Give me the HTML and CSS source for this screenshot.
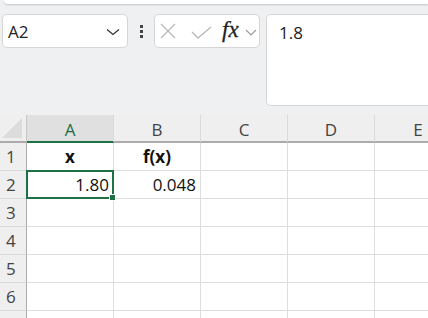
FILE: index.html
```html
<!DOCTYPE html>
<html lang="en">
<head>
    <meta charset="UTF-8">
    <title>Sheet</title>
    <link rel="stylesheet" href="styles.css">
</head>
<body>
<div class="ribbon"></div>

<div class="formula-row">
    <div class="namebox">
        <span>A2</span>
        <svg width="14" height="8" viewBox="0 0 14 8"><path d="M1 1.5 L7 6.5 L13 1.5" fill="none" stroke="#333" stroke-width="1.3"/></svg>
    </div>
    <div class="dots"><i></i><i></i><i></i></div>
    <div class="buttons">
        <svg width="16" height="16" viewBox="0 0 16 16"><path d="M1 1 L15 15 M15 1 L1 15" stroke="#b8b8b8" stroke-width="1.3"/></svg>
        <svg width="21" height="13" viewBox="0 0 21 13"><path d="M1 6 L7 12 L20 1" fill="none" stroke="#b8b8b8" stroke-width="1.3"/></svg>
        <span class="fx">fx</span>
        <svg width="12" height="7" viewBox="0 0 12 7"><path d="M1 1 L6 6 L11 1" fill="none" stroke="#9a9a9a" stroke-width="1.1"/></svg>
    </div>
    <div class="formula">1.8</div>
</div>

<div class="sheet">
    <div class="corner"><div class="tri"></div></div>
    <div class="colhead sel">A</div>
    <div class="colhead">B</div>
    <div class="colhead">C</div>
    <div class="colhead">D</div>
    <div class="colhead">E</div>

    <div class="rowhead">1</div>
    <div class="cell center bold">x</div>
    <div class="cell center bold">f(x)</div>
    <div class="cell"></div>
    <div class="cell"></div>
    <div class="cell"></div>

    <div class="rowhead">2</div>
    <div class="cell right active">1.80</div>
    <div class="cell right">0.048</div>
    <div class="cell"></div>
    <div class="cell"></div>
    <div class="cell"></div>

    <div class="rowhead">3</div>
    <div class="cell"></div><div class="cell"></div><div class="cell"></div><div class="cell"></div><div class="cell"></div>
    <div class="rowhead">4</div>
    <div class="cell"></div><div class="cell"></div><div class="cell"></div><div class="cell"></div><div class="cell"></div>
    <div class="rowhead">5</div>
    <div class="cell"></div><div class="cell"></div><div class="cell"></div><div class="cell"></div><div class="cell"></div>
    <div class="rowhead">6</div>
    <div class="cell"></div><div class="cell"></div><div class="cell"></div><div class="cell"></div><div class="cell"></div>
    <div class="rowhead"></div>
    <div class="cell"></div><div class="cell"></div><div class="cell"></div><div class="cell"></div><div class="cell"></div>
</div>
</body>
</html>
```

FILE: styles.css
```css
*{
    margin: 0;
    padding: 0;
    box-sizing: border-box;
}
html, body{
    height: 100%;
    overflow: hidden;
}
body{
    font-family: "Open Sans", "Liberation Sans", sans-serif;
    background: #eef0f2;
    color: #222;
}

.ribbon{
    height: 4px;
    margin-left: 4px;
    background: #fff;
    border-radius: 0 0 0 6px;
    box-shadow: 0 1px 2px rgba(0, 0, 0, 0.18);
}

.formula-row{
    display: flex;
    align-items: flex-start;
    margin-top: 10px;
    padding-left: 2px;
}
.namebox{
    width: 126px;
    height: 34px;
    background: #fff;
    border: 1px solid #d6d6d6;
    border-radius: 5px;
    display: flex;
    align-items: center;
    justify-content: space-between;
    padding: 0 7px 0 5px;
    font-size: 17px;
    color: #222;
}
.namebox svg{
    margin-top: 1px;
}
.dots{
    width: 26px;
    height: 34px;
    display: flex;
    flex-direction: column;
    align-items: center;
    justify-content: center;
    gap: 2px;
}
.dots i{
    width: 3px;
    height: 3px;
    background: #444;
}
.buttons{
    width: 106px;
    height: 34px;
    background: #fff;
    border: 1px solid #d6d6d6;
    border-radius: 5px;
    display: flex;
    align-items: center;
    padding-left: 5px;
}
.buttons svg:nth-child(1){
    margin-right: 15px;
}
.buttons svg:nth-child(2){
    margin-top: 3px;
    margin-right: 10px;
}
.fx{
    font-family: "Liberation Serif", serif;
    font-style: italic;
    font-size: 23px;
    color: #222;
    -webkit-text-stroke: 0.3px #222;
    margin-right: 6px;
    margin-top: -3px;
}
.buttons svg:nth-child(4){
    margin-top: 2px;
}
.formula{
    flex: 1;
    height: 92px;
    margin-left: 6px;
    background: #fff;
    border: 1px solid #d6d6d6;
    border-right: none;
    border-radius: 5px 0 0 5px;
    padding: 6px 0 0 12px;
    font-size: 17px;
    color: #222;
}

.sheet{
    margin-top: 9px;
    display: grid;
    grid-template-columns: 27px repeat(5, 87px);
    grid-template-rows: 28px repeat(7, 28px);
    background: #fff;
}
.corner{
    background: #efefef;
    border-right: 1px solid #c6c6c6;
    border-bottom: 2px solid #ababab;
    position: relative;
}
.tri{
    position: absolute;
    right: 4px;
    bottom: 3px;
    width: 0;
    height: 0;
    border-left: 20px solid transparent;
    border-bottom: 20px solid #dcdcdc;
}
.colhead{
    background: #efefef;
    border-right: 1px solid #dadada;
    border-bottom: 2px solid #ababab;
    font-size: 17px;
    color: #444;
    display: flex;
    align-items: center;
    justify-content: center;
    padding-top: 2px;
}
.colhead.sel{
    background: #e0e0e0;
    border-bottom-color: #1e7145;
    color: #1e6b41;
}
.rowhead{
    background: #efefef;
    border-right: 1px solid #ababab;
    border-bottom: 1px solid #dadada;
    font-size: 17px;
    color: #444;
    display: flex;
    align-items: center;
    padding-left: 6px;
}
.cell{
    border-right: 1px solid #dedede;
    border-bottom: 1px solid #dedede;
    font-size: 17px;
    color: #111;
    display: flex;
    align-items: center;
    padding: 0 4px;
}
.center{
    justify-content: center;
}
.right{
    justify-content: flex-end;
}
.bold{
    font-weight: bold;
}
.active{
    position: relative;
}
.active::before{
    content: "";
    position: absolute;
    left: -1px;
    top: -1px;
    right: -1px;
    bottom: -1px;
    border: 2px solid #1e7145;
}
.active::after{
    content: "";
    position: absolute;
    right: -3px;
    bottom: -3px;
    width: 5px;
    height: 5px;
    background: #1e7145;
    border: 1px solid #fff;
}
```
